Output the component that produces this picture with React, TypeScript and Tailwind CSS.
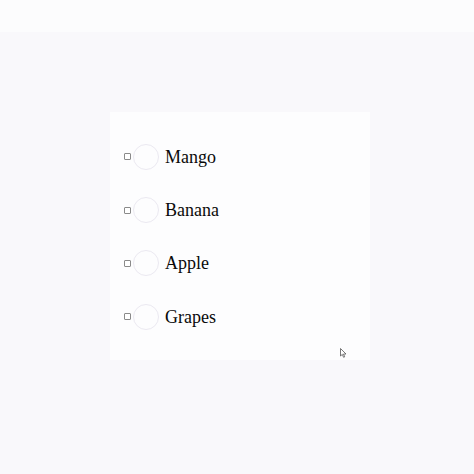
import { useState } from 'react';

const fruits = ['Mango', 'Banana', 'Apple', 'Grapes'];

function Cursor() {
  return (
    <svg width="7" height="10" viewBox="0 0 7 10" className="absolute left-[230px] top-[236px]">
      <path d="M0.5 0.5 L0.5 8 L2.3 6.4 L3.6 9.3 L4.7 8.8 L3.5 6 L6 6 Z" fill="#fff" stroke="#555" strokeWidth="0.8" />
    </svg>
  );
}

export default function App() {
  const [checked, setChecked] = useState<Record<string, boolean>>({});

  return (
    <div className="min-h-[474px] w-[474px] bg-[#f9f8fb]">
      <div className="h-[32px] bg-[#fcfcfd]" />
      <div className="pt-[80px]">
        <div className="relative ml-[110px] h-[248px] w-[260px] bg-[#fdfdfe] pt-[18px] pl-[14px]">
          <div className="flex flex-col">
            {fruits.map((fruit) => (
              <label key={fruit} className="flex h-[53.4px] cursor-pointer items-center">
                <input
                  type="checkbox"
                  className="peer sr-only"
                  checked={!!checked[fruit]}
                  onChange={() => setChecked((c) => ({ ...c, [fruit]: !c[fruit] }))}
                />
                <span className="h-[7px] w-[7px] rounded-[1px] border border-[#8a8a8a] bg-white" />
                <span className="ml-[2px] h-[26px] w-[26px] rounded-full border border-[#ebe9f1] bg-[#fdfdfe]" />
                <span className="ml-[6px] font-['Liberation_Serif',serif] text-[18px] leading-none text-[#0a0a0a]">
                  {fruit}
                </span>
              </label>
            ))}
          </div>
          <Cursor />
        </div>
      </div>
    </div>
  );
}
